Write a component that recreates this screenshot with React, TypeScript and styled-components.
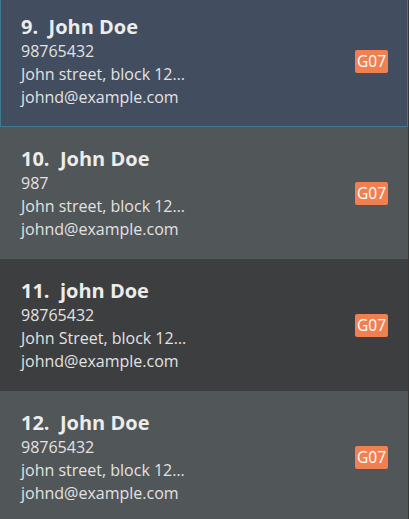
import React from "react";
import styled, { createGlobalStyle, css } from "styled-components";

const GlobalStyle = createGlobalStyle`
  html, body { margin: 0; padding: 0; background: #383838; }
  body { font-family: "Open Sans", "Noto Sans", sans-serif; }
`;

const ListView = styled.div`
  width: 409px;
  height: 519px;
  overflow: hidden;
  background: #383838;
`;

const ListInner = styled.div`
  margin-top: -5px;
  padding-right: 1px;
  display: flex;
  flex-direction: column;
`;

type Variant = "selected" | "even" | "odd";

const Cell = styled.div<{ $variant: Variant }>`
  box-sizing: border-box;
  height: 132px;
  padding: 0 20px 0 21px;
  display: flex;
  align-items: center;
  justify-content: space-between;
  ${({ $variant }) =>
    $variant === "selected"
      ? css`
          background: #424d5f;
          border: 1px solid #3d7a90;
          padding-left: 20px;
          padding-right: 19px;
        `
      : $variant === "even"
      ? css`
          background: #515658;
        `
      : css`
          background: #3c3e3f;
        `}
`;

const Info = styled.div`
  display: flex;
  flex-direction: column;
`;

const Name = styled.div`
  font-size: 20px;
  font-weight: 700;
  line-height: 26px;
  color: #ececec;
  white-space: pre;
`;

const Detail = styled.div`
  font-size: 16px;
  line-height: 23px;
  color: #e2e2e2;
  white-space: nowrap;
`;

const Tags = styled.div`
  display: flex;
  gap: 4px;
`;

const Tag = styled.span`
  background: #f07f51;
  color: #ffffff;
  font-size: 15.5px;
  line-height: 23px;
  height: 23px;
  padding: 0 2px;
  border-radius: 2px;
`;

type Person = {
  idx: number;
  name: string;
  phone: string;
  address: string;
  email: string;
  tags: string[];
};

const people: Person[] = [
  { idx: 9, name: "John Doe", phone: "98765432", address: "John street, block 12…", email: "johnd@example.com", tags: ["G07"] },
  { idx: 10, name: "John Doe", phone: "987", address: "John street, block 12…", email: "johnd@example.com", tags: ["G07"] },
  { idx: 11, name: "john Doe", phone: "98765432", address: "John Street, block 12…", email: "johnd@example.com", tags: ["G07"] },
  { idx: 12, name: "John Doe", phone: "98765432", address: "john street, block 12…", email: "johnd@example.com", tags: ["G07"] },
];

export default function App() {
  return (
    <>
      <GlobalStyle />
      <ListView>
        <ListInner>
          {people.map((p, i) => (
            <Cell key={p.idx} $variant={i === 0 ? "selected" : i % 2 === 1 ? "even" : "odd"}>
              <Info>
                <Name>{`${p.idx}.  ${p.name}`}</Name>
                <Detail>{p.phone}</Detail>
                <Detail>{p.address}</Detail>
                <Detail>{p.email}</Detail>
              </Info>
              <Tags>
                {p.tags.map((t) => (
                  <Tag key={t}>{t}</Tag>
                ))}
              </Tags>
            </Cell>
          ))}
        </ListInner>
      </ListView>
    </>
  );
}
